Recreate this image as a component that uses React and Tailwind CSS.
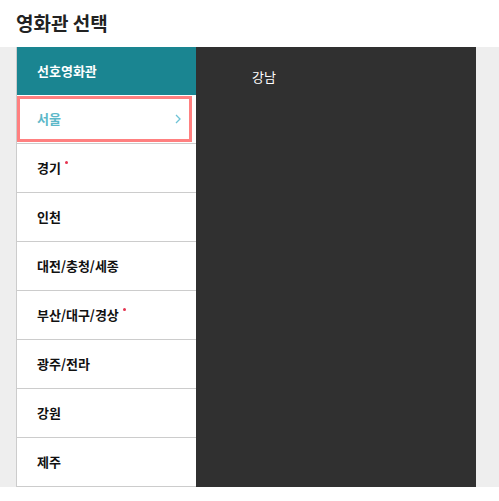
import React from 'react';

const regions = [
  { name: '서울', active: true },
  { name: '경기', dot: true },
  { name: '인천' },
  { name: '대전/충청/세종' },
  { name: '부산/대구/경상', dot: true },
  { name: '광주/전라' },
  { name: '강원' },
  { name: '제주' },
];

const font = { fontFamily: '"Noto Sans CJK KR", "Noto Sans", sans-serif' };

const RegionRow = ({ region }) => {
  if (region.active) {
    return (
      <div className="h-[49px] border-b border-[#cccccc] pt-px pr-[4px]">
        <div className="h-[46px] border-[3px] border-[#ff8080] flex items-center justify-between pl-[17px] pr-[8px]">
          <span className="text-[13px] font-bold text-[#5cb8c9]">{region.name}</span>
          <svg width="6" height="10" viewBox="0 0 6 10" fill="none">
            <path d="M1 1l4 4-4 4" stroke="#6ec3d6" strokeWidth="1.3" />
          </svg>
        </div>
      </div>
    );
  }
  return (
    <div className="h-[49px] border-b border-[#cccccc] flex items-center pl-[20px]">
      <span className="text-[13px] font-bold text-[#111111]">{region.name}</span>
      {region.dot && (
        <span className="ml-[4px] mb-[12px] w-[3px] h-[3px] rounded-full bg-[#e5334f]" />
      )}
    </div>
  );
};

export default function App() {
  return (
    <div className="w-[499px] h-[501px] bg-white" style={font}>
      <div className="h-[47px] flex items-center px-4">
        <h1 className="text-[19px] font-bold text-[#222222]">영화관 선택</h1>
      </div>
      <div className="flex bg-[#eeeeee] pl-4 pr-[23px]">
        <div className="w-[180px] border-l border-[#cccccc] bg-white">
          <div className="h-[48px] bg-[#1a8591] flex items-center pl-[20px]">
            <span className="text-[13px] font-bold text-white">선호영화관</span>
          </div>
          {regions.map((r) => (
            <RegionRow key={r.name} region={r} />
          ))}
        </div>
        <div className="flex-1 bg-[#303030] pt-4 pl-[56px]">
          <span className="text-[13px] leading-5 text-white">강남</span>
        </div>
      </div>
    </div>
  );
}
